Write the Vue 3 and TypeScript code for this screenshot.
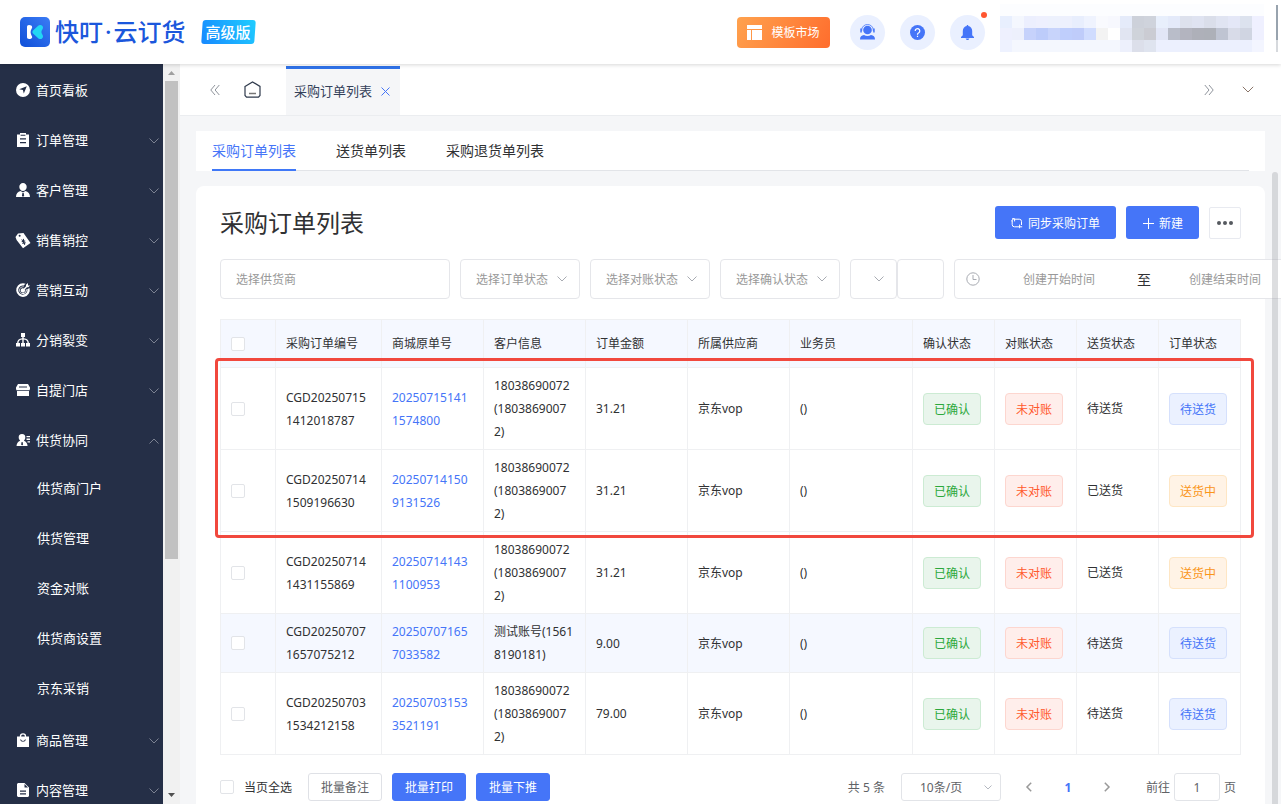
<script setup lang="ts">
import { ref } from 'vue'

interface MenuItem {
  label: string
  icon: string
  arrow?: 'down' | 'up'
  children?: string[]
}

interface OrderRow {
  id: string
  mall: string
  customer: string
  amount: string
  supplier: string
  clerk: string
  delivery: string
  status: string
  tone: string
}

const menu: MenuItem[] = [
  { label: '首页看板', icon: 'M7 0a7 7 0 1 0 0 14A7 7 0 0 0 7 0zM10.8 3.2 7.8 10.6 6.9 7.1 3.2 6.3z' },
  { label: '订单管理', arrow: 'down', icon: 'M1 1.5h3V0h6v1.5h3V14H1zM4.6 1.7v1h4.8v-1zM4 5.3h6v1.2H4zM4 9h6v1.2H4z' },
  { label: '客户管理', arrow: 'down', icon: 'M7 0a3.7 3.7 0 0 1 3.7 3.9C10.7 6 9 8 7 8S3.300 6 3.300 3.900A3.700 3.700 0 0 1 7 0zM0 14c0-3.500 1.800-5.200 4.600-6L7 9.500 9.400 8c2.800.8 4.600 2.500 4.600 6zM6.400 10h1.300l.5 3-1.200.8-1.100-.8z' },
  { label: '销售销控', arrow: 'down', icon: 'M-.5 4 2 .4 7.500 0 14.500 10 7 15.200.6 7zM3.600 1.800a1 1 0 1 0 .1 2 1 1 0 0 0-.1-2zM5 6.400l1 .1 1 .7.1-1.400.9.1v1.500l1.200.2.1.9-1 .1.3.8 1-.1.2.9-.9.1.3 1.200-.9.400-.7-1.400-1.100.4-.3-.8 1-.5-.3-.7-1.100.3-.2-.9.9-.4z' },
  { label: '营销互动', arrow: 'down', icon: 'M7 .3a6.800 6.800 0 1 0 6.500 4.800l-1.700.8a1 1 0 0 1-.5 0 4.600 4.600 0 1 1-3.200-3.300V2L9.600.8A6.800 6.800 0 0 0 7 .3zM12 0l-2 1.800v1.400L7.800 5.400a2.200 2.200 0 1 0 1 1L11 4.300h1.400L14 2.400h-2zM7 3.400a3.800 3.800 0 1 0 3.600 2.600l-.9.800A2.900 2.900 0 1 1 7.300 4.300l.8-.8A4 4 0 0 0 7 3.400z' },
  { label: '分销裂变', arrow: 'down', icon: 'M5 0h4v4H7.700v1.200c3.500.2 5.200 2 5.200 4.800H14v3.600h-4V10h1.500c0-2-1.300-3.200-3.800-3.400V10H9v3.600H5V10h1.300V6.600C3.800 6.800 2.500 8 2.500 10H4v3.600H0V10h1.100c0-2.800 1.700-4.600 5.200-4.800V4H5z' },
  { label: '自提门店', arrow: 'down', icon: 'M2 1h10l2 3.500v1.300c0 .9-.5 1.500-1 1.700V13H1V7.500C.5 7.300 0 6.700 0 5.800V4.500zM3 3.500v1h8v-1zM1 7.200v.9h12v-.9z' },
  {
    label: '供货协同',
    arrow: 'up',
    icon: 'M6 1a3.300 3.300 0 0 1 3.300 3.500c0 1.400-.6 2.500-1.400 3.200 2.300.7 3.500 2.600 3.700 5.300H.5c.2-2.700 1.400-4.600 3.700-5.300-.8-.7-1.500-1.800-1.500-3.200A3.300 3.300 0 0 1 6 1zM5.600 9h1l.5 2.600-1 .9-1-.9zM10.500 3H14v1.300h-3.500zM10.500 5.600H14v1.300h-3.500zM11.500 8.200H14v1.300h-2.500z',
    children: ['供货商门户', '供货管理', '资金对账', '供货商设置', '京东采销'],
  },
  { label: '商品管理', arrow: 'down', icon: 'M1 3.500h2.800a3.200 3.200 0 0 1 6.400 0H13V14H1zM5.100 3.500h3.800a1.900 1.900 0 0 0-3.800 0zM4 6.500a3.100 3.100 0 0 0 6 0H9a2.100 2.100 0 0 1-4 0z' },
  { label: '内容管理', arrow: 'down', icon: 'M2 0h6.500L13 4.500V13l-1 1H2l-1-1V1zM8.500 1v3.600H12zM4 7.500h6v1.200H4zM4 10.300h6v1.200H4z' },
]

const tabs = ['采购订单列表', '送货单列表', '采购退货单列表']
const activeTab = ref(0)

const statusFilters = ['选择订单状态', '选择对账状态', '选择确认状态']

const columns = ['采购订单编号', '商城原单号', '客户信息', '订单金额', '所属供应商', '业务员', '确认状态', '对账状态', '送货状态', '订单状态']

const longCustomer = '18038690072\n(1803869007\n2)'
const rows: OrderRow[] = [
  { id: 'CGD20250715\n1412018787', mall: '20250715141\n1574800', customer: longCustomer, amount: '31.21', supplier: '京东vop', clerk: '()', delivery: '待送货', status: '待送货', tone: 'blue' },
  { id: 'CGD20250714\n1509196630', mall: '20250714150\n9131526', customer: longCustomer, amount: '31.21', supplier: '京东vop', clerk: '()', delivery: '已送货', status: '送货中', tone: 'orange' },
  { id: 'CGD20250714\n1431155869', mall: '20250714143\n1100953', customer: longCustomer, amount: '31.21', supplier: '京东vop', clerk: '()', delivery: '已送货', status: '送货中', tone: 'orange' },
  { id: 'CGD20250707\n1657075212', mall: '20250707165\n7033582', customer: '测试账号(1561\n8190181)', amount: '9.00', supplier: '京东vop', clerk: '()', delivery: '待送货', status: '待送货', tone: 'blue' },
  { id: 'CGD20250703\n1534212158', mall: '20250703153\n3521191', customer: longCustomer, amount: '79.00', supplier: '京东vop', clerk: '()', delivery: '待送货', status: '待送货', tone: 'blue' },
]

const mosaic: string[] = [
  ...Array<string>(22).fill('#fcfdff'),
  '#e8effe', '#f4f7fe', '#eceffe', '#eef0fe', '#edf1fd', '#edf0fd', '#e8eefd', '#eff3fe', '#f9fafe', '#f7f8fe', '#e5ebfa', '#cdd1da', '#cfd3dc', '#e8effc', '#e4eafa', '#dde1ed', '#dfe3f1', '#dadeea', '#e0e4f2', '#e4e7f7', '#dce2ee', '#eff0ff',
  '#eef0fe', '#edf0fc', '#c6d2fb', '#bdccfa', '#c8d4fb', '#bfcefc', '#bfccfa', '#d0dcfe', '#f3f3f3', '#ffffff', '#e1e5f2', '#cfd3da', '#cbccd3', '#e2e6f6', '#b9bdc9', '#b3b4bf', '#aeb0b9', '#adb0b8', '#bfc4d2', '#d8dbe8', '#d0d5e2', '#eff0ff',
  '#eef2ff', ...Array<string>(9).fill('#f4f7fe'), '#edf0fc', '#dcdfea', '#dfe4ef', ...Array<string>(8).fill('#ecf0fe'), '#f3f5ff',
]
</script>

<template>
  <div class="page">
    <header class="top">
      <svg class="logo" width="30" height="30" viewBox="0 0 30 30">
        <defs>
          <linearGradient id="logoFill" x1="1" y1="0" x2="0" y2="1">
            <stop offset="0" stop-color="#3b7cf5" />
            <stop offset="1" stop-color="#0f4fd8" />
          </linearGradient>
        </defs>
        <rect width="30" height="30" rx="5" fill="url(#logoFill)" />
        <path d="M9 8c1.800 0 3.200.8 3.200 2.200 0 1-1.600 2.600-1.600 5s1.600 3.700 1.600 4.800c0 1.400-1.400 2-3 2-1.600 0-2.200-.8-2.200-2.200v-9.600C7 8.800 7.700 8 9 8z" fill="#fff" />
        <path d="M20.300 8c1.600 0 2.700 1.200 2.700 2.600 0 1.800-1.600 2.400-1.600 4.500s1.600 2.600 1.600 4.400c0 1.500-1.100 2.600-2.700 2.600-1 0-1.700-.5-2.400-1.200l-4.600-4.100c-1.200-1.100-1.200-2.400 0-3.500l4.600-4.200c.7-.7 1.400-1.100 2.400-1.100z" fill="#22d6f4" />
      </svg>
      <div class="brand">快叮<span class="brand-dot">·</span>云订货</div>
      <div class="edition"><span>高级版</span></div>
      <div class="grow"></div>
      <button class="market" type="button">
        <svg width="15" height="15" viewBox="0 0 15 15" fill="#fff"><path d="M0 0h15v4H0zM0 5h4v10H0zM5 5h10v10H5z" /></svg>
        模板市场
      </button>
      <button class="round" type="button" aria-label="客服">
        <svg width="15" height="16" viewBox="0 0 15 16">
          <circle cx="7.500" cy="6" r="4.300" fill="#4575f8" />
          <path d="M1.700 7V6a5.800 5.500 0 0 1 11.600 0v1" fill="none" stroke="#4575f8" stroke-width=".8" />
          <path d="M.3 4.500h1.500v4H.3zM13.200 4.500h1.500v4h-1.500zM0 15.500c0-3 1.500-4.200 4-4.500 2 1.300 5 1.300 7 0 2.500.3 4 1.500 4 4.500z" fill="#4575f8" />
        </svg>
      </button>
      <button class="round" type="button" aria-label="帮助">
        <svg width="15" height="15" viewBox="0 0 15 15" fill="none">
          <circle cx="7.500" cy="7.500" r="7.500" fill="#4575f8" />
          <path d="M5.200 6a2.300 2.300 0 1 1 3.600 1.800c-.8.5-1.300.9-1.300 1.700v.3M7.500 10.800V12" stroke="#fff" stroke-width="1.200" />
        </svg>
      </button>
      <button class="round" type="button" aria-label="通知">
        <svg width="13" height="15" viewBox="0 0 13 15" fill="#4575f8"><path d="M5.800 0h1.400v1c2.500.4 4 2.300 4 5v4.300L13 12v.9H0V12l1.800-1.700V6c0-2.700 1.500-4.600 4-5zM4.600 13.600h3.800L7.300 15H5.700z" /></svg>
        <i class="dot"></i>
      </button>
      <div class="account">
        <i v-for="(c, i) in mosaic" :key="i" :style="{ background: c }"></i>
      </div>
      <div class="edge"></div>
    </header>

    <div class="body">
      <aside class="side">
        <nav class="menu">
          <template v-for="item in menu" :key="item.label">
            <a class="menu-item" href="#">
              <svg width="14" height="14" viewBox="0 0 14 14" fill="#fff" fill-rule="evenodd"><path :d="item.icon" /></svg>
              <span>{{ item.label }}</span>
              <svg v-if="item.arrow" class="menu-arrow" width="10" height="6" viewBox="0 0 10 6" fill="none" stroke="#7c8292">
                <path :d="item.arrow === 'down' ? 'M.5.5 5 5 9.500.5' : 'M.5 5.500 5 1l4.500 4.500'" />
              </svg>
            </a>
            <a v-for="child in item.children ?? []" :key="child" class="menu-child" href="#">{{ child }}</a>
          </template>
        </nav>
        <div class="rail">
          <svg width="17" height="17" viewBox="0 0 17 17"><path d="M5 11h7L8.500 7z" fill="#a0a0a0" /></svg>
          <div class="rail-thumb"></div>
          <div class="rail-rest"></div>
          <svg width="17" height="17" viewBox="0 0 17 17"><path d="M5 6h7l-3.500 4z" fill="#505050" /></svg>
        </div>
      </aside>

      <main class="main">
        <div class="tabbar">
          <button class="plain back" type="button" aria-label="向左">
            <svg width="10" height="12" viewBox="0 0 10 12" fill="none" stroke="#8f949c"><path d="M5 1 .8 6 5 11M9.300 1 5.100 6l4.200 5" /></svg>
          </button>
          <button class="plain home" type="button" aria-label="首页">
            <svg width="17" height="17" viewBox="0 0 17 17" fill="none" stroke="#2f3a4c" stroke-width="1.200"><path d="M1 5.400 8.500.9 16 5.400v9l-1.500 1.700h-12L1 14.400z" /><path d="M5 12.500h7" stroke-width="1.500" stroke="#777" /></svg>
          </button>
          <div class="page-tab">
            <a href="#">采购订单列表</a>
            <button class="plain" type="button" aria-label="关闭">
              <svg width="9" height="9" viewBox="0 0 9 9" fill="none" stroke="#4575f8"><path d="m.5.5 8 8M8.500.5l-8 8" /></svg>
            </button>
          </div>
          <div class="grow"></div>
          <button class="plain forward" type="button" aria-label="向右">
            <svg width="10" height="12" viewBox="0 0 10 12" fill="none" stroke="#8f949c"><path d="m.8 1 4.200 5-4.200 5M5 1l4.200 5L5 11" /></svg>
          </button>
          <button class="plain more-tabs" type="button" aria-label="更多标签">
            <svg width="12" height="7" viewBox="0 0 12 7" fill="none" stroke="#8a7468"><path d="M.8.8 6 6 11.200.8" /></svg>
          </button>
        </div>

        <div class="content">
          <div class="subtabs">
            <div class="subtabs-line">
              <button v-for="(t, i) in tabs" :key="t" type="button" :class="['subtab', { on: i === activeTab }]" @click="activeTab = i">{{ t }}</button>
            </div>
          </div>

          <section class="card">
            <div class="card-head">
              <h1>采购订单列表</h1>
              <button class="primary sync" type="button">
                <svg width="12" height="12" viewBox="0 0 12 12" fill="none" stroke="#fff"><path d="M3.200 2.200H8.300A2.200 2.200 0 0 1 10.500 4.400V8M1.200 3.200V7.600A2.200 2.200 0 0 0 3.400 9.800H8.600M1 4.500V3.400L3.200 1M8.600 7.600v3.600M8.600 9.800h2.600M1 1.800h2.600v2.600" /></svg>
                同步采购订单
              </button>
              <button class="primary create" type="button">
                <svg width="12" height="12" viewBox="0 0 12 12" fill="none" stroke="#fff"><path d="M6.500 1v11M1 6.500h11" /></svg>
                新建
              </button>
              <button class="more" type="button" aria-label="更多">
                <svg width="16" height="4" viewBox="0 0 16 4" fill="#55595f"><circle cx="2" cy="2" r="2" /><circle cx="8" cy="2" r="2" /><circle cx="14" cy="2" r="2" /></svg>
              </button>
            </div>

            <div class="filters">
              <input class="box supplier" type="text" placeholder="选择供货商" aria-label="选择供货商" />
              <label v-for="f in statusFilters" :key="f" class="box pick">
                <select :aria-label="f"><option>{{ f }}</option></select>
                <svg width="10" height="6" viewBox="0 0 10 6" fill="none" stroke="#a8abb2"><path d="M.5.5 5 5 9.500.5" /></svg>
              </label>
              <div class="pair">
                <label class="box pick small">
                  <select aria-label="筛选字段"><option></option></select>
                  <svg width="10" height="6" viewBox="0 0 10 6" fill="none" stroke="#a8abb2"><path d="M.5.5 5 5 9.500.5" /></svg>
                </label>
                <input class="box small" type="text" aria-label="筛选内容" />
              </div>
              <div class="box range">
                <svg width="14" height="14" viewBox="0 0 14 14" fill="none" stroke="#a8abb2"><circle cx="7" cy="7" r="6.200" /><path d="M7 3v4.500h3.500" /></svg>
                <input type="text" placeholder="创建开始时间" aria-label="创建开始时间" />
                <span>至</span>
                <input type="text" placeholder="创建结束时间" aria-label="创建结束时间" />
              </div>
            </div>

            <div class="table-wrap">
              <table>
                <colgroup>
                  <col class="w-check" /><col class="w-id" /><col class="w-mid" /><col class="w-mid" /><col class="w-mid" /><col class="w-mid" /><col class="w-clerk" /><col class="w-state" /><col class="w-state" /><col class="w-state" /><col class="w-state" />
                </colgroup>
                <thead>
                  <tr>
                    <th><input type="checkbox" aria-label="全选" /></th>
                    <th v-for="c in columns" :key="c">{{ c }}</th>
                  </tr>
                </thead>
                <tbody>
                  <tr v-for="(r, i) in rows" :key="r.id" :class="{ tinted: i === 3 }">
                    <td><input type="checkbox" :aria-label="r.id" /></td>
                    <td>{{ r.id }}</td>
                    <td><a class="link" href="#">{{ r.mall }}</a></td>
                    <td>{{ r.customer }}</td>
                    <td>{{ r.amount }}</td>
                    <td>{{ r.supplier }}</td>
                    <td>{{ r.clerk }}</td>
                    <td><span class="tag green">已确认</span></td>
                    <td><span class="tag red">未对账</span></td>
                    <td>{{ r.delivery }}</td>
                    <td><span :class="['tag', r.tone]">{{ r.status }}</span></td>
                  </tr>
                </tbody>
              </table>
              <div class="marker"></div>
            </div>

            <div class="foot">
              <label class="pick-all"><input type="checkbox" />当页全选</label>
              <button class="batch" type="button">批量备注</button>
              <button class="batch solid" type="button">批量打印</button>
              <button class="batch solid" type="button">批量下推</button>
              <div class="grow"></div>
              <span class="total">共 5 条</span>
              <label class="pick size">
                <select aria-label="每页条数"><option>10条/页</option></select>
                <svg width="8" height="5" viewBox="0 0 8 5" fill="none" stroke="#b4b8c0"><path d="M.5.5 4 4 7.500.5" /></svg>
              </label>
              <div class="pager">
                <button class="plain" type="button" aria-label="上一页"><svg width="6" height="10" viewBox="0 0 6 10" fill="none" stroke="#999" stroke-width="1.500"><path d="M5.200.8 1 5l4.200 4.200" /></svg></button>
                <button class="plain current" type="button">1</button>
                <button class="plain" type="button" aria-label="下一页"><svg width="6" height="10" viewBox="0 0 6 10" fill="none" stroke="#999" stroke-width="1.500"><path d="M.8.8 5 5 .8 9.200" /></svg></button>
              </div>
              <label class="jump">前往<input type="text" value="1" />页</label>
            </div>
          </section>
        </div>
        <div class="thumb"></div>
      </main>
    </div>
  </div>
</template>

<style>
body {
  margin: 0;
  overflow: hidden;
}
</style>

<style scoped>
.page {
  display: flex;
  flex-direction: column;
  height: 100vh;
  overflow: hidden;
  background: #f5f6f8;
  color: #303133;
  font-family: "Noto Sans", "Noto Sans CJK SC", sans-serif;
  font-size: 12px;
}
.page *,
.page *::before {
  box-sizing: border-box;
}
button,
input,
select {
  margin: 0;
  padding: 0;
  font: inherit;
  color: inherit;
  outline: none;
}
button {
  cursor: pointer;
}
a {
  color: inherit;
  text-decoration: none;
}
svg {
  display: block;
  flex: none;
  overflow: visible;
}
.grow {
  flex: 1;
}
.plain {
  display: flex;
  align-items: center;
  justify-content: center;
  border: 0;
  background: none;
}

/* header */
.top {
  position: relative;
  z-index: 2;
  display: flex;
  flex: none;
  align-items: center;
  height: 64px;
  padding-left: 20px;
  background: #fff;
  box-shadow: 0 1px 4px rgba(0, 0, 0, 0.16);
}
.brand {
  margin-left: 5px;
  color: #1b57dc;
  font-size: 24px;
  font-weight: 500;
  line-height: 32px;
  white-space: nowrap;
}
.brand-dot {
  padding: 0 2px;
}
.edition {
  position: relative;
  width: 55px;
  height: 24px;
  margin-left: 15px;
  color: #fff;
  font-size: 15px;
  font-weight: 500;
  line-height: 24px;
  text-align: center;
}
.edition::before {
  content: "";
  position: absolute;
  inset: 0 1px;
  border-radius: 3px;
  background: linear-gradient(60deg, #1688ff, #20cdff);
  transform: skewX(-4deg);
}
.edition span {
  position: relative;
}
.market {
  display: flex;
  align-items: center;
  justify-content: center;
  gap: 9px;
  width: 93px;
  height: 31px;
  border: 0;
  border-radius: 4px;
  background: linear-gradient(120deg, #ffa24e, #ff6d2d);
  color: #fff;
}
.round {
  position: relative;
  display: flex;
  align-items: center;
  justify-content: center;
  width: 35px;
  height: 35px;
  margin-left: 15px;
  border: 0;
  border-radius: 50%;
  background: #eaf0ff;
}
.market + .round {
  margin-left: 20px;
}
.dot {
  position: absolute;
  top: -3px;
  right: -2px;
  width: 6px;
  height: 6px;
  border-radius: 50%;
  background: #ff5630;
}
.account {
  display: grid;
  grid-template-columns: repeat(22, 12px);
  grid-auto-rows: 12px;
  margin: 0 12px 8px 15px;
}
.edge {
  width: 2px;
  height: 47px;
  margin: 0 3px 7px 0;
  background: linear-gradient(#98a3ae 75%, #d6d9dd 75%);
}

/* sidebar */
.body {
  display: flex;
  flex: 1;
  min-height: 0;
}
.side {
  display: flex;
  flex: none;
}
.menu {
  width: 163px;
  padding-top: 1px;
  overflow: hidden;
  background: #252f47;
  color: #fff;
  font-size: 13px;
}
.menu-item {
  display: flex;
  align-items: center;
  height: 50px;
  padding: 0 4px 0 16px;
}
.menu-item span {
  padding: 0 0 2px 6px;
}
.menu-arrow {
  margin: 2px 0 0 auto;
}
.menu-child {
  display: block;
  height: 50px;
  padding-left: 37px;
  line-height: 47px;
}
.rail {
  display: flex;
  flex-direction: column;
  width: 17px;
  background: #f1f1f1;
}
.rail-thumb {
  flex: 478;
  margin: 0 2px;
  background: #c1c1c1;
}
.rail-rest {
  flex: 228;
}

/* page tabs */
.main {
  position: relative;
  display: flex;
  flex: 1;
  flex-direction: column;
  min-width: 0;
  overflow: hidden;
}
.tabbar {
  display: flex;
  flex: none;
  align-items: center;
  height: 52px;
  padding-left: 30px;
  border-bottom: 1px solid #ebedf0;
  background: #fff;
}
.home {
  margin-left: 24px;
}
.page-tab {
  display: flex;
  align-self: stretch;
  align-items: center;
  gap: 9px;
  margin: 2px 0 0 25px;
  padding: 0 10px 4px 8px;
  border-top: 3px solid #2f72e8;
  background: #f5f6f8;
  color: #34415a;
  font-size: 13px;
}
.page-tab button {
  padding-top: 2px;
}
.more-tabs {
  margin: 0 27px 0 28px;
}

/* content */
.content {
  padding: 15px 16px 0;
}
.subtabs {
  height: 40px;
  padding: 0 16px;
  background: #fff;
}
.subtabs-line {
  display: flex;
  gap: 40px;
  height: 40px;
  border-bottom: 1px solid #e2e4e8;
}
.subtab {
  height: 40px;
  border: 0;
  border-bottom: 2px solid transparent;
  background: none;
  font-size: 14px;
}
.subtab.on {
  border-color: #3f78f7;
  color: #4575f8;
}
.card {
  margin-top: 15px;
  padding: 20px 24px;
  border-radius: 8px;
  background: #fff;
}
.card-head {
  display: flex;
  align-items: flex-end;
  gap: 10px;
}
h1 {
  flex: 1;
  margin: 0;
  font-size: 24px;
  font-weight: 400;
  line-height: 33px;
}
.primary {
  display: flex;
  align-items: center;
  justify-content: center;
  gap: 5px;
  height: 33px;
  border: 0;
  border-radius: 3px;
  background: #4575f8;
  color: #fff;
}
.sync {
  width: 121px;
}
.create {
  width: 73px;
}
.more {
  display: flex;
  align-items: center;
  justify-content: center;
  width: 32px;
  height: 32px;
  border: 1px solid #e8eaf0;
  border-radius: 2px;
  background: #fff;
}
.filters {
  display: flex;
  gap: 10px;
  margin-top: 20px;
}
.box {
  flex: none;
  height: 40px;
  border: 1px solid #e5e6ea;
  border-radius: 4px;
  background: #fff;
}
.supplier {
  width: 230px;
  padding: 0 15px;
}
input::placeholder {
  color: #999;
  opacity: 1;
}
.pick {
  display: grid;
  align-items: center;
  width: 120px;
  color: #999;
}
.pick > * {
  grid-area: 1 / 1;
}
.pick select {
  width: 100%;
  height: 100%;
  padding: 0 26px 0 15px;
  border: 0;
  background: none;
  appearance: none;
}
.pick svg {
  justify-self: end;
  margin-right: 12px;
  pointer-events: none;
}
.pair {
  display: flex;
  flex: none;
}
.small {
  width: 47px;
}
.range {
  display: flex;
  align-items: center;
  padding: 0 11px;
}
.range input {
  width: 140px;
  margin-left: 9px;
  border: 0;
  background: none;
  text-align: center;
}
.range span {
  margin-left: 8px;
  font-size: 14px;
}
.range span + input {
  margin-left: 4px;
}

/* table */
.table-wrap {
  position: relative;
  margin-top: 20px;
}
table {
  width: 100%;
  border: 1px solid #eff0f2;
  border-width: 1px 0 0 1px;
  border-spacing: 0;
  table-layout: fixed;
}
.w-check {
  width: 55px;
}
.w-id {
  width: 106px;
}
.w-mid {
  width: 102px;
}
.w-clerk {
  width: 123px;
}
.w-state {
  width: 82px;
}
th,
td {
  padding: 6px 10px;
  border: 1px solid #eff0f2;
  border-width: 0 1px 1px 0;
  font-weight: 400;
  line-height: 23px;
  text-align: left;
  vertical-align: middle;
  white-space: pre-line;
}
th {
  height: 48px;
  background: #f5f8ff;
}
.tinted td {
  background: #f5f8ff;
}
input[type="checkbox"] {
  display: block;
  flex: none;
  width: 14px;
  height: 14px;
  border: 1px solid #e2e4e8;
  border-radius: 2px;
  background: #fff;
  appearance: none;
}
.link {
  color: #4575f8;
}
.tag {
  display: block;
  width: 58px;
  height: 32px;
  border: 1px solid;
  border-radius: 4px;
  line-height: 31px;
  text-align: center;
}
.green {
  border-color: #ccebd3;
  background: #e9f5ec;
  color: #2ca83c;
}
.red {
  border-color: #fdd6cf;
  background: #ffeeeb;
  color: #ff5a2e;
}
.blue {
  border-color: #d5e0fc;
  background: #ebf1ff;
  color: #4575f8;
}
.orange {
  border-color: #fee6c4;
  background: #fff3e6;
  color: #fa9519;
}
.marker {
  position: absolute;
  top: 39px;
  right: -13px;
  left: -5px;
  height: 180px;
  border: 3px solid #f1483d;
  border-radius: 4px;
  pointer-events: none;
}

/* footer */
.foot {
  display: flex;
  align-items: center;
  margin-top: 18px;
  color: #606266;
}
.pick-all {
  display: flex;
  align-items: center;
  gap: 10px;
  margin-right: 6px;
  color: #303133;
}
.batch {
  width: 74px;
  height: 28px;
  margin-left: 10px;
  border: 1px solid #dfe1e6;
  border-radius: 3px;
  background: #fff;
}
.solid {
  border-color: #4575f8;
  background: #4575f8;
  color: #fff;
}
.size {
  width: 100px;
  height: 28px;
  margin-left: 16px;
  border: 1px solid #e2e4e8;
  border-radius: 3px;
  color: #606266;
}
.size select {
  padding-left: 18px;
}
.size svg {
  margin-right: 8px;
}
.pager {
  display: flex;
  gap: 9px;
  margin: 0 24px 0 13px;
}
.pager button {
  width: 30px;
  height: 28px;
}
.current {
  color: #4575f8;
  font-weight: 700;
}
.jump {
  display: flex;
  align-items: center;
  gap: 4px;
  margin-right: 5px;
}
.jump input {
  width: 46px;
  height: 28px;
  border: 1px solid #e2e4e8;
  border-radius: 3px;
  background: #fff;
  text-align: center;
}
.thumb {
  position: absolute;
  top: 108px;
  right: 3px;
  bottom: 0;
  width: 6px;
  border-radius: 3px 3px 0 0;
  background: rgba(144, 147, 153, 0.3);
}
</style>
